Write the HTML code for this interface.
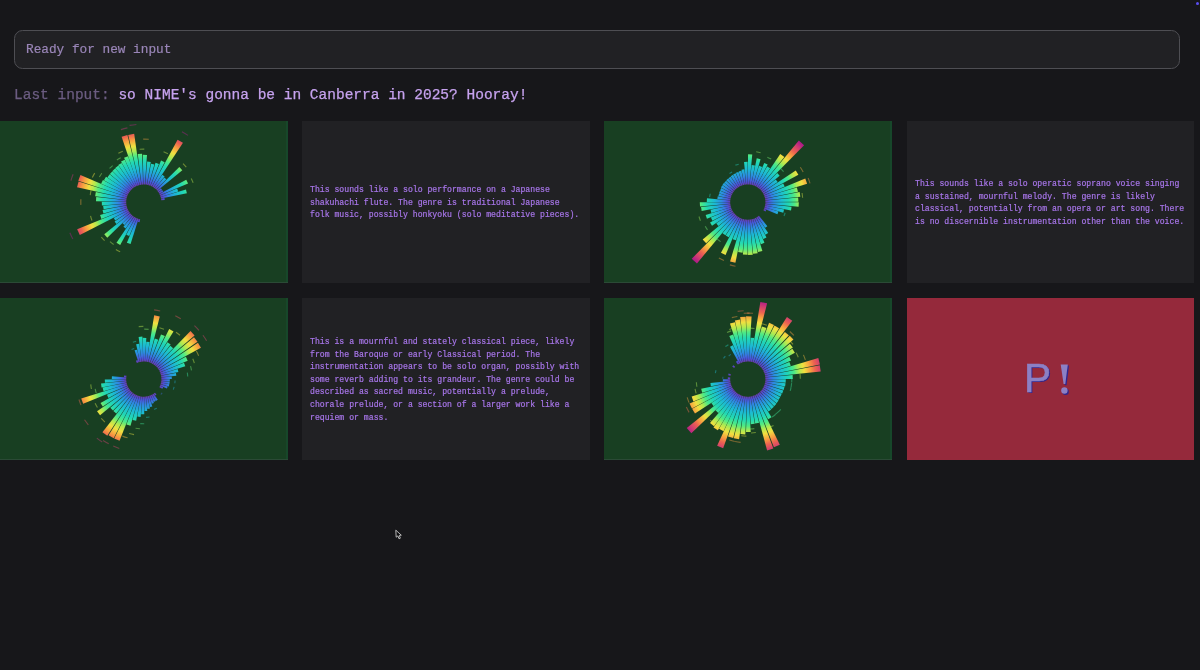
<!DOCTYPE html>
<html><head><meta charset="utf-8"><style>
*{margin:0;padding:0;box-sizing:border-box}
html,body{width:1200px;height:670px;overflow:hidden;background:#17171a}
body{position:relative;font-family:"Liberation Mono",monospace}
.ph,.last,.txt,.pb{will-change:transform}
.inp{position:absolute;left:14px;top:30px;width:1165.5px;height:38.5px;border:1.5px solid #4e4e53;border-radius:8.5px;background:#212124}
.ph{position:absolute;left:26px;top:41px;font-size:12.75px;line-height:18px;color:#9a86b8;white-space:pre;-webkit-text-stroke:0.2px #9a86b8}
.last{position:absolute;left:14px;top:86px;font-size:14.5px;line-height:18px;white-space:pre;color:#c6a2ee;-webkit-text-stroke:0.25px #c6a2ee}
.last span{color:#6c5d82;-webkit-text-stroke:0.25px #6c5d82}
.p{position:absolute;overflow:hidden}
.g{background:#183f22;box-shadow:inset 0 -1px 0 #2b4a36,inset -2px 0 0 #17472a}
.t{background:#212124}
.r{background:#95293b}
.txt{position:absolute;left:7.8px;right:0;font-size:8.17px;line-height:12.6px;color:#a876ea;white-space:pre;-webkit-text-stroke:0.2px #a876ea}
.pb{position:absolute;font-family:"Liberation Sans",sans-serif;font-size:40.5px;line-height:48px;color:#8c80c4;text-shadow:1.2px 1.2px 0 #2e2690;white-space:pre;-webkit-text-stroke:0.6px #8c80c4}
.pb b{font-weight:bold;display:inline-block;transform:scaleX(1.15)}
.cur{position:absolute;left:0;top:0}
.dot{position:absolute;left:1195.8px;top:2px;width:3.2px;height:3.2px;border-radius:50%;background:#5a4ef0}
</style></head>
<body>
<div class="dot"></div>
<svg class="cur" width="1200" height="670" style="position:absolute;left:0;top:0"><path d="M395.8 530.2 L396.2 537.2 L397.9 535.9 L399 538.8 L400.3 538.2 L399.3 535.4 L401.3 535.2 Z" fill="#0e0e10" stroke="#c8c8c8" stroke-width="0.9" stroke-linejoin="round"/></svg>
<div class="inp"></div>
<div class="ph">Ready for new input</div>
<div class="last"><span>Last input:</span> so NIME's gonna be in Canberra in 2025? Hooray!</div>
<div class="p g" style="left:0px;top:120.6px;width:287.6px;height:162.2px"><svg width="287.6" height="162.2" style="position:absolute;left:0;top:0"><defs><radialGradient id="g00" gradientUnits="userSpaceOnUse" cx="0" cy="0" r="90.0"><stop offset="0.0000" stop-color="#6a3cb0"/><stop offset="0.1956" stop-color="#6a3cb0"/><stop offset="0.2278" stop-color="#4c50d8"/><stop offset="0.2889" stop-color="#2e88e2"/><stop offset="0.3667" stop-color="#1cb8d4"/><stop offset="0.4556" stop-color="#22d8b4"/><stop offset="0.5222" stop-color="#50ea84"/><stop offset="0.5778" stop-color="#b0ea50"/><stop offset="0.6333" stop-color="#f0e040"/><stop offset="0.7000" stop-color="#f8a040"/><stop offset="0.7556" stop-color="#ec6450"/><stop offset="0.8222" stop-color="#d03c70"/><stop offset="0.8778" stop-color="#b01c88"/><stop offset="0.9444" stop-color="#981090"/><stop offset="1.0000" stop-color="#901090"/></radialGradient></defs><g transform="translate(143.80,81.10)" fill="url(#g00)"><path d="M-3.62 17.22 L-4.22 20.06 L-5.97 19.61 L-5.13 16.84Z"/><path d="M-5.30 16.78 L-13.25 41.96 L-16.90 40.63 L-6.76 16.25Z"/><path d="M-6.92 16.18 L-14.56 34.02 L-17.50 32.60 L-8.32 15.51Z"/><path d="M-8.48 15.42 L-23.61 42.94 L-27.31 40.68 L-9.81 14.61Z"/><path d="M-9.96 14.51 L-18.10 26.39 L-20.36 24.69 L-11.20 13.58Z"/><path d="M-11.34 13.46 L-19.32 22.95 L-21.27 21.15 L-12.48 12.41Z"/><path d="M-12.60 12.28 L-36.53 35.59 L-39.52 32.23 L-13.64 11.12Z"/><path d="M-13.75 10.98 L-27.35 21.84 L-29.17 19.34 L-14.67 9.73Z"/><path d="M-14.77 9.58 L-28.52 18.50 L-30.05 15.91 L-15.55 8.24Z"/><path d="M-15.64 8.07 L-63.98 33.02 L-66.65 27.24 L-16.29 6.66Z"/><path d="M-16.36 6.48 L-42.40 16.79 L-43.71 12.99 L-16.87 5.01Z"/><path d="M-16.92 4.83 L-40.39 11.52 L-41.25 7.91 L-17.28 3.32Z"/><path d="M-17.32 3.13 L-40.15 7.25 L-40.63 3.68 L-17.53 1.59Z"/><path d="M-17.54 1.40 L-41.87 3.34 L-42.00 -0.37 L-17.60 -0.16Z"/><path d="M-17.60 -0.35 L-47.79 -0.94 L-47.52 -5.16 L-17.50 -1.90Z"/><path d="M-17.48 -2.09 L-48.65 -5.81 L-47.95 -10.09 L-17.22 -3.62Z"/><path d="M-17.18 -3.81 L-66.78 -14.80 L-65.21 -20.64 L-16.78 -5.31Z"/><path d="M-16.74 -5.45 L-65.52 -21.33 L-63.38 -27.03 L-16.19 -6.90Z"/><path d="M-16.15 -6.99 L-42.67 -18.47 L-40.88 -22.16 L-15.47 -8.39Z"/><path d="M-15.43 -8.47 L-39.88 -21.90 L-37.79 -25.33 L-14.62 -9.80Z"/><path d="M-14.57 -9.88 L-36.42 -24.69 L-34.10 -27.81 L-13.64 -11.12Z"/><path d="M-13.58 -11.20 L-33.95 -27.99 L-31.34 -30.88 L-12.54 -12.35Z"/><path d="M-12.47 -12.42 L-31.32 -31.19 L-28.44 -33.83 L-11.33 -13.47Z"/><path d="M-11.27 -13.52 L-28.49 -34.18 L-25.37 -36.56 L-10.03 -14.46Z"/><path d="M-9.98 -14.50 L-25.52 -37.06 L-22.15 -39.17 L-8.66 -15.32Z"/><path d="M-8.61 -15.35 L-22.75 -40.56 L-19.08 -42.41 L-7.22 -16.05Z"/><path d="M-7.17 -16.08 L-19.75 -44.30 L-15.76 -45.87 L-5.72 -16.64Z"/><path d="M-5.66 -16.66 L-22.19 -65.33 L-16.34 -67.04 L-4.17 -17.10Z"/><path d="M-3.98 -17.14 L-15.61 -67.21 L-9.62 -68.33 L-2.45 -17.43Z"/><path d="M-2.19 -17.46 L-6.03 -48.12 L-1.76 -48.47 L-0.64 -17.59Z"/><path d="M-0.37 -17.60 L-1.00 -47.29 L3.18 -47.19 L1.18 -17.56Z"/><path d="M1.45 -17.54 L3.36 -40.66 L6.94 -40.21 L2.99 -17.34Z"/><path d="M3.26 -17.30 L7.21 -38.33 L10.57 -37.54 L4.77 -16.94Z"/><path d="M5.03 -16.87 L11.71 -39.29 L15.13 -38.11 L6.49 -16.36Z"/><path d="M6.74 -16.26 L17.24 -41.57 L20.84 -39.88 L8.15 -15.60Z"/><path d="M8.37 -15.48 L33.78 -62.45 L39.16 -59.23 L9.71 -14.68Z"/><path d="M9.85 -14.59 L18.47 -27.35 L20.81 -25.61 L11.10 -13.66Z"/><path d="M11.23 -13.55 L20.42 -24.64 L22.52 -22.74 L12.38 -12.51Z"/><path d="M12.51 -12.38 L35.53 -35.18 L38.49 -31.91 L13.55 -11.23Z"/><path d="M13.66 -11.10 L17.07 -13.87 L18.23 -12.31 L14.59 -9.85Z"/><path d="M14.68 -9.71 L18.35 -12.13 L19.35 -10.47 L15.48 -8.37Z"/><path d="M15.56 -8.22 L42.44 -22.42 L44.26 -18.59 L16.23 -6.81Z"/><path d="M16.29 -6.66 L33.33 -13.61 L34.40 -10.62 L16.82 -5.19Z"/><path d="M16.87 -5.03 L42.17 -12.57 L43.11 -8.80 L17.24 -3.52Z"/><path d="M17.28 -3.35 L20.62 -4.00 L20.89 -2.16 L17.51 -1.81Z"/><path d="M-22.89 -72.47 A76 76 0 0 1 -16.41 -74.21" fill="none" stroke="url(#g00)" stroke-width="1.1" opacity="0.45"/><path d="M-14.26 -76.69 A78 78 0 0 1 -7.43 -77.64" fill="none" stroke="url(#g00)" stroke-width="1.1" opacity="0.45"/><path d="M38.13 -70.33 A80 80 0 0 1 44.19 -66.69" fill="none" stroke="url(#g00)" stroke-width="1.1" opacity="0.45"/><path d="M-0.58 -63.00 A63 63 0 0 1 4.98 -62.80" fill="none" stroke="url(#g00)" stroke-width="1.1" opacity="0.45"/><path d="M-25.42 -48.77 A55 55 0 0 1 -21.02 -50.82" fill="none" stroke="url(#g00)" stroke-width="1.1" opacity="0.45"/><path d="M-4.19 -52.83 A53 53 0 0 1 0.49 -53.00" fill="none" stroke="url(#g00)" stroke-width="1.1" opacity="0.45"/><path d="M19.76 -50.25 A54 54 0 0 1 24.12 -48.31" fill="none" stroke="url(#g00)" stroke-width="1.1" opacity="0.45"/><path d="M39.21 -38.57 A55 55 0 0 1 42.46 -34.96" fill="none" stroke="url(#g00)" stroke-width="1.1" opacity="0.45"/><path d="M47.42 -23.67 A53 53 0 0 1 49.32 -19.40" fill="none" stroke="url(#g00)" stroke-width="1.1" opacity="0.45"/><path d="M-26.89 -42.15 A50 50 0 0 1 -23.06 -44.36" fill="none" stroke="url(#g00)" stroke-width="1.1" opacity="0.45"/><path d="M-34.25 -33.62 A48 48 0 0 1 -31.15 -36.52" fill="none" stroke="url(#g00)" stroke-width="1.1" opacity="0.45"/><path d="M-44.40 -25.09 A51 51 0 0 1 -42.01 -28.91" fill="none" stroke="url(#g00)" stroke-width="1.1" opacity="0.45"/><path d="M-51.46 -24.51 A57 57 0 0 1 -49.10 -28.96" fill="none" stroke="url(#g00)" stroke-width="1.1" opacity="0.45"/><path d="M-72.88 -21.55 A76 76 0 0 1 -70.70 -27.89" fill="none" stroke="url(#g00)" stroke-width="1.1" opacity="0.45"/><path d="M-62.94 2.78 A63 63 0 0 1 -62.94 -2.78" fill="none" stroke="url(#g00)" stroke-width="1.1" opacity="0.45"/><path d="M-53.54 -7.02 A54 54 0 0 1 -52.71 -11.72" fill="none" stroke="url(#g00)" stroke-width="1.1" opacity="0.45"/><path d="M-51.84 18.39 A55 55 0 0 1 -53.26 13.74" fill="none" stroke="url(#g00)" stroke-width="1.1" opacity="0.45"/><path d="M-70.94 36.98 A80 80 0 0 1 -73.93 30.57" fill="none" stroke="url(#g00)" stroke-width="1.1" opacity="0.45"/><path d="M-39.21 38.57 A55 55 0 0 1 -42.46 34.96" fill="none" stroke="url(#g00)" stroke-width="1.1" opacity="0.45"/><path d="M-30.17 42.35 A52 52 0 0 1 -33.79 39.52" fill="none" stroke="url(#g00)" stroke-width="1.1" opacity="0.45"/><path d="M-23.65 49.66 A55 55 0 0 1 -27.94 47.37" fill="none" stroke="url(#g00)" stroke-width="1.1" opacity="0.45"/></g></svg></div>
<div class="p t" style="left:302px;top:120.6px;width:287.6px;height:162.2px"><div class="txt" style="top:63px">This sounds like a solo performance on a Japanese
shakuhachi flute. The genre is traditional Japanese
folk music, possibly honkyoku (solo meditative pieces).</div></div>
<div class="p g" style="left:604px;top:120.6px;width:287.6px;height:162.2px"><svg width="287.6" height="162.2" style="position:absolute;left:0;top:0"><defs><radialGradient id="g20" gradientUnits="userSpaceOnUse" cx="0" cy="0" r="90.0"><stop offset="0.0000" stop-color="#6a3cb0"/><stop offset="0.1956" stop-color="#6a3cb0"/><stop offset="0.2278" stop-color="#4c50d8"/><stop offset="0.2889" stop-color="#2e88e2"/><stop offset="0.3667" stop-color="#1cb8d4"/><stop offset="0.4556" stop-color="#22d8b4"/><stop offset="0.5222" stop-color="#50ea84"/><stop offset="0.5778" stop-color="#b0ea50"/><stop offset="0.6333" stop-color="#f0e040"/><stop offset="0.7000" stop-color="#f8a040"/><stop offset="0.7556" stop-color="#ec6450"/><stop offset="0.8222" stop-color="#d03c70"/><stop offset="0.8778" stop-color="#b01c88"/><stop offset="0.9444" stop-color="#981090"/><stop offset="1.0000" stop-color="#901090"/></radialGradient></defs><g transform="translate(143.80,81.10)" fill="url(#g20)"><path d="M17.60 0.09 L51.00 0.25 L50.78 4.75 L17.52 1.64Z"/><path d="M17.51 1.81 L43.77 4.53 L43.20 8.37 L17.28 3.35Z"/><path d="M17.24 3.52 L36.25 7.40 L35.46 10.57 L16.87 5.03Z"/><path d="M16.82 5.19 L30.58 9.44 L29.62 12.10 L16.29 6.66Z"/><path d="M16.23 6.81 L18.44 7.74 L17.68 9.34 L15.56 8.22Z"/><path d="M11.10 13.66 L19.55 24.06 L17.35 25.69 L9.85 14.59Z"/><path d="M9.71 14.68 L20.40 30.86 L17.60 32.55 L8.37 15.48Z"/><path d="M8.22 15.56 L18.68 35.37 L15.49 36.88 L6.81 16.23Z"/><path d="M6.66 16.29 L16.64 40.73 L12.98 42.04 L5.19 16.82Z"/><path d="M5.03 16.87 L14.56 48.88 L10.20 49.97 L3.52 17.24Z"/><path d="M3.35 17.28 L9.89 51.05 L5.35 51.72 L1.81 17.51Z"/><path d="M1.64 17.52 L4.94 52.77 L0.26 53.00 L0.09 17.60Z"/><path d="M-0.09 17.60 L-0.26 52.70 L-4.91 52.47 L-1.64 17.52Z"/><path d="M-1.81 17.51 L-5.23 50.53 L-9.67 49.87 L-3.35 17.28Z"/><path d="M-3.52 17.24 L-12.39 60.75 L-17.71 59.42 L-5.03 16.87Z"/><path d="M-5.19 16.82 L-11.80 38.22 L-15.13 37.03 L-6.66 16.29Z"/><path d="M-6.81 16.23 L-22.23 52.92 L-26.81 50.75 L-8.22 15.56Z"/><path d="M-8.37 15.48 L-19.03 35.18 L-22.06 33.37 L-9.71 14.68Z"/><path d="M-9.85 14.59 L-22.39 33.15 L-25.22 31.04 L-11.10 13.66Z"/><path d="M-11.23 13.55 L-50.86 61.36 L-56.08 56.63 L-12.38 12.51Z"/><path d="M-12.51 12.38 L-41.64 41.23 L-45.12 37.40 L-13.55 11.23Z"/><path d="M-13.66 11.10 L-29.49 23.96 L-31.49 21.27 L-14.59 9.85Z"/><path d="M-14.68 9.71 L-35.79 23.66 L-37.73 20.41 L-15.48 8.37Z"/><path d="M-15.56 8.22 L-35.37 18.68 L-36.88 15.49 L-16.23 6.81Z"/><path d="M-16.29 6.66 L-40.83 16.68 L-42.14 13.01 L-16.82 5.19Z"/><path d="M-16.87 5.03 L-36.42 10.85 L-37.23 7.60 L-17.24 3.52Z"/><path d="M-17.28 3.35 L-46.14 8.94 L-46.75 4.84 L-17.51 1.81Z"/><path d="M-17.52 1.64 L-47.79 4.47 L-48.00 0.24 L-17.60 0.09Z"/><path d="M-17.60 -0.09 L-41.00 -0.20 L-40.82 -3.82 L-17.52 -1.64Z"/><path d="M-17.51 -1.81 L-30.44 -3.15 L-30.04 -5.82 L-17.28 -3.35Z"/><path d="M-17.24 -3.52 L-29.39 -6.00 L-28.75 -8.57 L-16.87 -5.03Z"/><path d="M-16.82 -5.19 L-28.67 -8.85 L-27.77 -11.34 L-16.29 -6.66Z"/><path d="M-16.23 -6.81 L-27.66 -11.62 L-26.53 -14.01 L-15.56 -8.22Z"/><path d="M-15.48 -8.37 L-26.83 -14.51 L-25.44 -16.82 L-14.68 -9.71Z"/><path d="M-14.59 -9.85 L-25.36 -17.13 L-23.75 -19.30 L-13.66 -11.10Z"/><path d="M-13.55 -11.23 L-23.48 -19.46 L-21.67 -21.46 L-12.51 -12.38Z"/><path d="M-12.38 -12.51 L-21.53 -21.74 L-19.53 -23.56 L-11.23 -13.55Z"/><path d="M-11.10 -13.66 L-19.36 -23.83 L-17.18 -25.44 L-9.85 -14.59Z"/><path d="M-9.71 -14.68 L-17.10 -25.86 L-14.75 -27.27 L-8.37 -15.48Z"/><path d="M-8.22 -15.56 L-14.62 -27.68 L-12.12 -28.86 L-6.81 -16.23Z"/><path d="M-6.66 -16.29 L-11.95 -29.25 L-9.32 -30.19 L-5.19 -16.82Z"/><path d="M-5.03 -16.87 L-9.14 -30.67 L-6.40 -31.35 L-3.52 -17.24Z"/><path d="M-3.35 -17.28 L-6.28 -32.40 L-3.40 -32.82 L-1.81 -17.51Z"/><path d="M-1.64 -17.52 L-3.75 -40.12 L-0.20 -40.30 L-0.09 -17.60Z"/><path d="M0.09 -17.60 L0.24 -47.90 L4.46 -47.69 L1.64 -17.52Z"/><path d="M1.81 -17.51 L3.85 -37.20 L7.12 -36.72 L3.35 -17.28Z"/><path d="M3.52 -17.24 L8.94 -43.80 L12.77 -42.84 L5.03 -16.87Z"/><path d="M5.19 -16.82 L11.21 -36.31 L14.37 -35.18 L6.66 -16.29Z"/><path d="M6.81 -16.23 L16.46 -39.18 L19.85 -37.58 L8.22 -15.56Z"/><path d="M8.37 -15.48 L19.27 -35.62 L22.34 -33.78 L9.71 -14.68Z"/><path d="M9.85 -14.59 L32.46 -48.07 L36.57 -45.01 L11.10 -13.66Z"/><path d="M11.23 -13.55 L51.05 -61.59 L56.29 -56.85 L12.38 -12.51Z"/><path d="M12.51 -12.38 L29.42 -29.13 L31.87 -26.42 L13.55 -11.23Z"/><path d="M13.66 -11.10 L27.94 -22.70 L29.83 -20.15 L14.59 -9.85Z"/><path d="M14.68 -9.71 L47.97 -31.71 L50.58 -27.35 L15.48 -8.37Z"/><path d="M15.56 -8.22 L35.37 -18.68 L36.88 -15.49 L16.23 -6.81Z"/><path d="M16.29 -6.66 L57.49 -23.48 L59.34 -18.32 L16.82 -5.19Z"/><path d="M16.87 -5.03 L49.07 -14.62 L50.17 -10.24 L17.24 -3.52Z"/><path d="M17.28 -3.35 L51.84 -10.05 L52.52 -5.43 L17.51 -1.81Z"/><path d="M17.52 -1.64 L50.38 -4.71 L50.60 -0.25 L17.60 -0.09Z"/><path d="M8.39 -50.31 A51 51 0 0 1 12.80 -49.37" fill="none" stroke="url(#g20)" stroke-width="1.1" opacity="0.45"/><path d="M19.51 -44.95 A49 49 0 0 1 23.40 -43.05" fill="none" stroke="url(#g20)" stroke-width="1.1" opacity="0.45"/><path d="M32.92 -33.54 A47 47 0 0 1 35.76 -30.50" fill="none" stroke="url(#g20)" stroke-width="1.1" opacity="0.45"/><path d="M52.52 -34.80 A63 63 0 0 1 55.38 -30.03" fill="none" stroke="url(#g20)" stroke-width="1.1" opacity="0.45"/><path d="M60.34 -24.17 A65 65 0 0 1 62.24 -18.75" fill="none" stroke="url(#g20)" stroke-width="1.1" opacity="0.45"/><path d="M54.24 -9.11 A55 55 0 0 1 54.83 -4.29" fill="none" stroke="url(#g20)" stroke-width="1.1" opacity="0.45"/><path d="M17.89 34.32 A38.7 38.7 0 0 1 14.79 35.76" fill="none" stroke="url(#g20)" stroke-width="1.1" opacity="0.45"/><path d="M37.30 10.67 A38.8 38.8 0 0 1 36.22 13.92" fill="none" stroke="url(#g20)" stroke-width="1.1" opacity="0.45"/><path d="M-23.87 58.30 A63 63 0 0 1 -28.93 55.97" fill="none" stroke="url(#g20)" stroke-width="1.1" opacity="0.45"/><path d="M-12.31 64.13 A65.3 65.3 0 0 1 -17.92 62.79" fill="none" stroke="url(#g20)" stroke-width="1.1" opacity="0.45"/><path d="M-47.35 18.68 A50.9 50.9 0 0 1 -48.81 14.43" fill="none" stroke="url(#g20)" stroke-width="1.1" opacity="0.45"/><path d="M-40.28 27.72 A48.9 48.9 0 0 1 -42.57 24.06" fill="none" stroke="url(#g20)" stroke-width="1.1" opacity="0.45"/><path d="M-27.17 39.57 A48 48 0 0 1 -30.55 37.02" fill="none" stroke="url(#g20)" stroke-width="1.1" opacity="0.45"/><path d="M-12.40 -36.98 A39 39 0 0 1 -9.08 -37.93" fill="none" stroke="url(#g20)" stroke-width="1.1" opacity="0.45"/><path d="M-18.28 -28.67 A34 34 0 0 1 -15.68 -30.17" fill="none" stroke="url(#g20)" stroke-width="1.1" opacity="0.45"/><path d="M-38.17 -5.00 A38.5 38.5 0 0 1 -37.58 -8.35" fill="none" stroke="url(#g20)" stroke-width="1.1" opacity="0.45"/></g></svg></div>
<div class="p t" style="left:906.8px;top:120.6px;width:287.6px;height:162.2px"><div class="txt" style="top:57px">This sounds like a solo operatic soprano voice singing
a sustained, mournful melody. The genre is likely
classical, potentially from an opera or art song. There
is no discernible instrumentation other than the voice.</div></div>
<div class="p g" style="left:0px;top:297.6px;width:287.6px;height:162.2px"><svg width="287.6" height="162.2" style="position:absolute;left:0;top:0"><defs><radialGradient id="g01" gradientUnits="userSpaceOnUse" cx="0" cy="0" r="90.0"><stop offset="0.0000" stop-color="#6a3cb0"/><stop offset="0.1956" stop-color="#6a3cb0"/><stop offset="0.2278" stop-color="#4c50d8"/><stop offset="0.2889" stop-color="#2e88e2"/><stop offset="0.3667" stop-color="#1cb8d4"/><stop offset="0.4556" stop-color="#22d8b4"/><stop offset="0.5222" stop-color="#50ea84"/><stop offset="0.5778" stop-color="#b0ea50"/><stop offset="0.6333" stop-color="#f0e040"/><stop offset="0.7000" stop-color="#f8a040"/><stop offset="0.7556" stop-color="#ec6450"/><stop offset="0.8222" stop-color="#d03c70"/><stop offset="0.8778" stop-color="#b01c88"/><stop offset="0.9444" stop-color="#981090"/><stop offset="1.0000" stop-color="#901090"/></radialGradient></defs><g transform="translate(143.80,81.10)" fill="url(#g01)"><path d="M17.60 0.08 L26.00 0.12 L25.89 2.41 L17.52 1.63Z"/><path d="M17.51 1.79 L25.87 2.64 L25.53 4.92 L17.28 3.33Z"/><path d="M17.25 3.48 L25.49 5.15 L24.93 7.37 L16.88 4.99Z"/><path d="M16.83 5.14 L23.91 7.31 L23.17 9.39 L16.31 6.61Z"/><path d="M16.25 6.76 L19.39 8.06 L18.60 9.74 L15.59 8.16Z"/><path d="M11.20 13.57 L12.73 15.42 L11.32 16.49 L9.96 14.51Z"/><path d="M9.83 14.60 L13.97 20.74 L12.08 21.89 L8.51 15.41Z"/><path d="M8.37 15.48 L11.90 21.99 L9.91 22.95 L6.98 16.16Z"/><path d="M6.84 16.22 L10.11 23.96 L7.95 24.75 L5.38 16.76Z"/><path d="M5.24 16.80 L8.52 27.30 L6.08 27.95 L3.74 17.20Z"/><path d="M3.60 17.23 L6.13 29.37 L3.52 29.79 L2.06 17.48Z"/><path d="M1.92 17.50 L3.48 31.81 L0.66 31.99 L0.37 17.60Z"/><path d="M0.22 17.60 L0.44 35.20 L-2.67 35.10 L-1.34 17.55Z"/><path d="M-1.48 17.54 L-3.20 37.87 L-6.53 37.44 L-3.02 17.34Z"/><path d="M-3.17 17.31 L-7.63 41.71 L-11.28 40.87 L-4.68 16.97Z"/><path d="M-4.82 16.93 L-13.30 46.64 L-17.36 45.29 L-6.30 16.43Z"/><path d="M-6.44 16.38 L-24.25 61.71 L-29.60 59.33 L-7.86 15.75Z"/><path d="M-8.00 15.68 L-30.14 59.05 L-35.23 56.16 L-9.35 14.91Z"/><path d="M-9.55 14.78 L-36.52 56.53 L-41.36 53.09 L-10.82 13.88Z"/><path d="M-11.00 13.74 L-27.50 34.35 L-30.42 31.79 L-12.17 12.71Z"/><path d="M-12.34 12.55 L-30.84 31.38 L-33.49 28.54 L-13.40 11.41Z"/><path d="M-13.55 11.24 L-43.72 36.26 L-46.75 32.26 L-14.49 10.00Z"/><path d="M-14.62 9.80 L-41.03 27.52 L-43.29 23.79 L-15.42 8.48Z"/><path d="M-15.54 8.27 L-35.31 18.80 L-36.83 15.61 L-16.20 6.87Z"/><path d="M-16.29 6.66 L-60.63 24.77 L-62.58 19.32 L-16.82 5.19Z"/><path d="M-16.86 5.05 L-40.24 12.04 L-41.14 8.44 L-17.24 3.54Z"/><path d="M-17.27 3.39 L-42.20 8.28 L-42.76 4.52 L-17.50 1.85Z"/><path d="M-17.52 1.70 L-38.82 3.76 L-39.00 0.32 L-17.60 0.15Z"/><path d="M-17.60 -0.01 L-32.00 -0.02 L-31.87 -2.84 L-17.53 -1.56Z"/><path d="M-17.52 -1.71 L-19.90 -1.95 L-19.66 -3.70 L-17.30 -3.25Z"/><path d="M-6.94 -16.17 L-7.89 -18.38 L-6.24 -19.00 L-5.49 -16.72Z"/><path d="M-5.39 -16.76 L-9.24 -28.75 L-6.67 -29.45 L-3.89 -17.17Z"/><path d="M-3.78 -17.19 L-7.65 -34.77 L-4.55 -35.31 L-2.25 -17.46Z"/><path d="M-2.15 -17.47 L-5.18 -42.18 L-1.44 -42.48 L-0.60 -17.59Z"/><path d="M-0.49 -17.59 L-1.15 -41.28 L2.50 -41.22 L1.07 -17.57Z"/><path d="M1.17 -17.56 L2.50 -37.42 L5.79 -37.05 L2.72 -17.39Z"/><path d="M2.82 -17.37 L10.38 -63.86 L15.98 -62.70 L4.35 -17.05Z"/><path d="M4.60 -16.99 L10.97 -40.54 L14.50 -39.42 L6.08 -16.52Z"/><path d="M6.32 -16.43 L17.20 -44.70 L21.08 -43.01 L7.75 -15.80Z"/><path d="M7.97 -15.69 L25.41 -50.02 L29.72 -47.58 L9.32 -14.93Z"/><path d="M9.51 -14.81 L23.66 -36.86 L26.82 -34.63 L10.78 -13.91Z"/><path d="M10.95 -13.78 L26.50 -33.36 L29.34 -30.89 L12.12 -12.76Z"/><path d="M12.28 -12.61 L46.73 -48.01 L50.79 -43.70 L13.34 -11.48Z"/><path d="M13.51 -11.28 L50.20 -41.92 L53.70 -37.33 L14.45 -10.05Z"/><path d="M14.61 -9.81 L54.14 -36.33 L57.13 -31.41 L15.42 -8.48Z"/><path d="M15.56 -8.23 L42.08 -22.25 L43.88 -18.45 L16.22 -6.82Z"/><path d="M16.29 -6.66 L40.18 -16.41 L41.47 -12.80 L16.82 -5.19Z"/><path d="M16.87 -5.03 L33.83 -10.08 L34.59 -7.06 L17.24 -3.52Z"/><path d="M17.28 -3.35 L32.10 -6.22 L32.53 -3.36 L17.51 -1.81Z"/><path d="M17.52 -1.64 L27.88 -2.61 L28.00 -0.14 L17.60 -0.09Z"/><path d="M10.31 -69.24 A70 70 0 0 1 16.38 -68.06" fill="none" stroke="url(#g01)" stroke-width="1.1" opacity="0.45"/><path d="M31.51 -63.29 A70.7 70.7 0 0 1 36.97 -60.26" fill="none" stroke="url(#g01)" stroke-width="1.1" opacity="0.45"/><path d="M50.63 -53.42 A73.6 73.6 0 0 1 55.15 -48.74" fill="none" stroke="url(#g01)" stroke-width="1.1" opacity="0.45"/><path d="M59.14 -43.81 A73.6 73.6 0 0 1 62.78 -38.42" fill="none" stroke="url(#g01)" stroke-width="1.1" opacity="0.45"/><path d="M15.67 -51.36 A53.7 53.7 0 0 1 20.14 -49.78" fill="none" stroke="url(#g01)" stroke-width="1.1" opacity="0.45"/><path d="M32.20 -46.91 A56.9 56.9 0 0 1 36.22 -43.89" fill="none" stroke="url(#g01)" stroke-width="1.1" opacity="0.45"/><path d="M52.56 -28.10 A59.6 59.6 0 0 1 54.83 -23.35" fill="none" stroke="url(#g01)" stroke-width="1.1" opacity="0.45"/><path d="M48.95 -20.31 A53 53 0 0 1 50.56 -15.91" fill="none" stroke="url(#g01)" stroke-width="1.1" opacity="0.45"/><path d="M46.73 -12.99 A48.5 48.5 0 0 1 47.69 -8.81" fill="none" stroke="url(#g01)" stroke-width="1.1" opacity="0.45"/><path d="M43.51 -6.53 A44 44 0 0 1 43.92 -2.66" fill="none" stroke="url(#g01)" stroke-width="1.1" opacity="0.45"/><path d="M0.41 -50.00 A50 50 0 0 1 4.82 -49.77" fill="none" stroke="url(#g01)" stroke-width="1.1" opacity="0.45"/><path d="M31.27 1.35 A31.3 31.3 0 0 1 31.03 4.10" fill="none" stroke="url(#g01)" stroke-width="1.1" opacity="0.45"/><path d="M30.31 7.82 A31.3 31.3 0 0 1 29.50 10.46" fill="none" stroke="url(#g01)" stroke-width="1.1" opacity="0.45"/><path d="M18.38 13.83 A23 23 0 0 1 17.08 15.40" fill="none" stroke="url(#g01)" stroke-width="1.1" opacity="0.45"/><path d="M13.03 29.23 A32 32 0 0 1 10.40 30.26" fill="none" stroke="url(#g01)" stroke-width="1.1" opacity="0.45"/><path d="M5.68 37.88 A38.3 38.3 0 0 1 2.32 38.23" fill="none" stroke="url(#g01)" stroke-width="1.1" opacity="0.45"/><path d="M-62.81 26.06 A68 68 0 0 1 -64.86 20.41" fill="none" stroke="url(#g01)" stroke-width="1.1" opacity="0.45"/><path d="M-55.45 45.76 A71.9 71.9 0 0 1 -59.28 40.69" fill="none" stroke="url(#g01)" stroke-width="1.1" opacity="0.45"/><path d="M-41.58 62.90 A75.4 75.4 0 0 1 -46.97 58.98" fill="none" stroke="url(#g01)" stroke-width="1.1" opacity="0.45"/><path d="M-24.53 69.39 A73.6 73.6 0 0 1 -30.56 66.96" fill="none" stroke="url(#g01)" stroke-width="1.1" opacity="0.45"/><path d="M-35.08 64.70 A73.6 73.6 0 0 1 -40.66 61.35" fill="none" stroke="url(#g01)" stroke-width="1.1" opacity="0.45"/><path d="M-46.37 28.45 A54.4 54.4 0 0 1 -48.70 24.25" fill="none" stroke="url(#g01)" stroke-width="1.1" opacity="0.45"/><path d="M-38.94 42.99 A58 58 0 0 1 -42.58 39.38" fill="none" stroke="url(#g01)" stroke-width="1.1" opacity="0.45"/><path d="M-16.24 58.69 A60.9 60.9 0 0 1 -21.36 57.03" fill="none" stroke="url(#g01)" stroke-width="1.1" opacity="0.45"/><path d="M-9.76 55.55 A56.4 56.4 0 0 1 -14.63 54.47" fill="none" stroke="url(#g01)" stroke-width="1.1" opacity="0.45"/><path d="M-3.88 49.65 A49.8 49.8 0 0 1 -8.25 49.11" fill="none" stroke="url(#g01)" stroke-width="1.1" opacity="0.45"/><path d="M0.41 44.70 A44.7 44.7 0 0 1 -3.53 44.56" fill="none" stroke="url(#g01)" stroke-width="1.1" opacity="0.45"/><path d="M-52.37 9.92 A53.3 53.3 0 0 1 -53.04 5.26" fill="none" stroke="url(#g01)" stroke-width="1.1" opacity="0.45"/><path d="M-47.55 14.11 A49.6 49.6 0 0 1 -48.61 9.86" fill="none" stroke="url(#g01)" stroke-width="1.1" opacity="0.45"/><path d="M-5.08 -52.45 A52.7 52.7 0 0 1 -0.43 -52.70" fill="none" stroke="url(#g01)" stroke-width="1.1" opacity="0.45"/><path d="M-10.95 -36.91 A38.5 38.5 0 0 1 -7.66 -37.73" fill="none" stroke="url(#g01)" stroke-width="1.1" opacity="0.45"/><path d="M-12.26 -29.56 A32 32 0 0 1 -9.61 -30.52" fill="none" stroke="url(#g01)" stroke-width="1.1" opacity="0.45"/></g></svg></div>
<div class="p t" style="left:302px;top:297.6px;width:287.6px;height:162.2px"><div class="txt" style="top:38px">This is a mournful and stately classical piece, likely
from the Baroque or early Classical period. The
instrumentation appears to be solo organ, possibly with
some reverb adding to its grandeur. The genre could be
described as sacred music, potentially a prelude,
chorale prelude, or a section of a larger work like a
requiem or mass.</div></div>
<div class="p g" style="left:604px;top:297.6px;width:287.6px;height:162.2px"><svg width="287.6" height="162.2" style="position:absolute;left:0;top:0"><defs><radialGradient id="g21" gradientUnits="userSpaceOnUse" cx="0" cy="0" r="90.0"><stop offset="0.0000" stop-color="#6a3cb0"/><stop offset="0.1956" stop-color="#6a3cb0"/><stop offset="0.2278" stop-color="#4c50d8"/><stop offset="0.2889" stop-color="#2e88e2"/><stop offset="0.3667" stop-color="#1cb8d4"/><stop offset="0.4556" stop-color="#22d8b4"/><stop offset="0.5222" stop-color="#50ea84"/><stop offset="0.5778" stop-color="#b0ea50"/><stop offset="0.6333" stop-color="#f0e040"/><stop offset="0.7000" stop-color="#f8a040"/><stop offset="0.7556" stop-color="#ec6450"/><stop offset="0.8222" stop-color="#d03c70"/><stop offset="0.8778" stop-color="#b01c88"/><stop offset="0.9444" stop-color="#981090"/><stop offset="1.0000" stop-color="#901090"/></radialGradient></defs><g transform="translate(143.80,81.10)" fill="url(#g21)"><path d="M17.60 0.11 L38.00 0.23 L37.83 3.59 L17.52 1.66Z"/><path d="M17.50 1.88 L37.78 4.05 L37.28 7.37 L17.27 3.41Z"/><path d="M17.22 3.62 L36.70 7.72 L35.87 10.93 L16.84 5.13Z"/><path d="M16.77 5.34 L35.54 11.31 L34.41 14.40 L16.24 6.80Z"/><path d="M16.15 6.99 L33.95 14.70 L32.52 17.64 L15.47 8.39Z"/><path d="M15.37 8.58 L32.30 18.04 L30.59 20.82 L14.55 9.90Z"/><path d="M14.43 10.08 L30.74 21.48 L28.72 24.11 L13.48 11.31Z"/><path d="M13.34 11.48 L28.64 24.66 L26.36 27.10 L12.27 12.62Z"/><path d="M12.11 12.78 L26.14 27.58 L23.60 29.78 L10.93 13.79Z"/><path d="M10.75 13.94 L23.45 30.41 L20.68 32.36 L9.48 14.83Z"/><path d="M9.28 14.95 L23.74 38.23 L20.27 40.18 L7.93 15.71Z"/><path d="M7.72 15.82 L32.02 65.60 L26.11 68.17 L6.30 16.44Z"/><path d="M6.08 16.52 L25.54 69.35 L19.32 71.33 L4.60 16.99Z"/><path d="M4.41 17.04 L11.28 43.56 L7.39 44.39 L2.89 17.36Z"/><path d="M2.70 17.39 L6.93 44.66 L2.97 45.10 L1.15 17.56Z"/><path d="M0.96 17.57 L2.89 52.92 L-1.79 52.97 L-0.59 17.59Z"/><path d="M-0.79 17.58 L-2.49 55.44 L-7.37 55.01 L-2.34 17.44Z"/><path d="M-2.53 17.42 L-8.72 60.07 L-13.99 59.07 L-4.06 17.13Z"/><path d="M-4.25 17.08 L-14.62 58.81 L-19.75 57.29 L-5.74 16.64Z"/><path d="M-5.92 16.57 L-24.65 69.03 L-30.65 66.59 L-7.36 15.99Z"/><path d="M-7.43 15.95 L-24.25 52.03 L-28.74 49.69 L-8.81 15.23Z"/><path d="M-8.88 15.20 L-29.92 51.20 L-34.32 48.36 L-10.19 14.35Z"/><path d="M-10.25 14.31 L-33.77 47.15 L-37.80 43.99 L-11.47 13.35Z"/><path d="M-11.53 13.30 L-29.48 34.00 L-32.36 31.27 L-12.66 12.23Z"/><path d="M-12.71 12.17 L-56.48 54.09 L-61.03 48.90 L-13.74 11.00Z"/><path d="M-13.78 10.94 L-34.14 27.11 L-36.40 23.99 L-14.70 9.69Z"/><path d="M-14.74 9.62 L-52.84 34.49 L-55.67 29.70 L-15.53 8.28Z"/><path d="M-15.56 8.22 L-55.89 29.50 L-58.28 24.45 L-16.23 6.81Z"/><path d="M-16.29 6.67 L-54.41 22.29 L-56.17 17.40 L-16.81 5.21Z"/><path d="M-16.86 5.06 L-45.59 13.69 L-46.62 9.61 L-17.24 3.55Z"/><path d="M-17.27 3.40 L-36.89 7.27 L-37.39 3.98 L-17.50 1.86Z"/><path d="M-17.52 1.71 L-24.88 2.43 L-25.00 0.22 L-17.60 0.16Z"/><path d="M-17.60 0.00 L-20.00 0.00 L-19.92 -1.76 L-17.53 -1.55Z"/><path d="M-17.27 -3.39 L-19.62 -3.86 L-19.21 -5.57 L-16.90 -4.91Z"/><path d="M-13.69 -11.06 L-15.55 -12.57 L-14.38 -13.90 L-12.66 -12.23Z"/><path d="M-9.93 -14.53 L-11.85 -17.34 L-10.27 -18.32 L-8.61 -15.35Z"/><path d="M-8.48 -15.42 L-17.82 -32.43 L-14.89 -33.87 L-7.08 -16.11Z"/><path d="M-6.94 -16.17 L-18.50 -43.10 L-14.62 -44.56 L-5.49 -16.72Z"/><path d="M-5.39 -16.76 L-17.84 -55.50 L-12.87 -56.86 L-3.89 -17.17Z"/><path d="M-3.78 -17.19 L-12.90 -58.60 L-7.67 -59.51 L-2.25 -17.46Z"/><path d="M-2.15 -17.47 L-7.62 -62.03 L-2.11 -62.46 L-0.60 -17.59Z"/><path d="M-0.49 -17.59 L-1.74 -62.78 L3.80 -62.68 L1.07 -17.57Z"/><path d="M1.17 -17.56 L2.76 -41.41 L6.41 -41.00 L2.72 -17.39Z"/><path d="M2.82 -17.37 L12.55 -77.19 L19.31 -75.78 L4.35 -17.06Z"/><path d="M4.55 -17.00 L14.07 -52.55 L18.65 -51.10 L6.03 -16.53Z"/><path d="M6.23 -16.46 L21.32 -56.30 L26.20 -54.20 L7.66 -15.85Z"/><path d="M7.85 -15.75 L26.67 -53.52 L31.29 -50.96 L9.21 -15.00Z"/><path d="M9.39 -14.88 L39.12 -61.99 L44.44 -58.29 L10.67 -14.00Z"/><path d="M10.87 -13.84 L37.05 -47.19 L41.07 -43.74 L12.05 -12.83Z"/><path d="M12.23 -12.66 L41.97 -43.44 L45.64 -39.57 L13.30 -11.53Z"/><path d="M13.46 -11.34 L42.07 -35.43 L45.03 -31.58 L14.41 -10.11Z"/><path d="M14.55 -9.90 L44.56 -30.32 L47.06 -26.27 L15.37 -8.58Z"/><path d="M15.49 -8.36 L41.45 -22.37 L43.26 -18.62 L16.17 -6.96Z"/><path d="M16.26 -6.73 L41.58 -17.20 L42.94 -13.47 L16.79 -5.27Z"/><path d="M16.87 -5.03 L70.53 -21.02 L72.11 -14.72 L17.24 -3.52Z"/><path d="M17.28 -3.35 L71.96 -13.95 L72.91 -7.54 L17.51 -1.81Z"/><path d="M17.52 -1.64 L44.80 -4.19 L45.00 -0.22 L17.60 -0.09Z"/><path d="M14.29 -55.39 A57.2 57.2 0 0 1 19.12 -53.91" fill="none" stroke="url(#g21)" stroke-width="1.1" opacity="0.45"/><path d="M42.05 -47.58 A63.5 63.5 0 0 1 46.09 -43.69" fill="none" stroke="url(#g21)" stroke-width="1.1" opacity="0.45"/><path d="M42.00 -38.53 A57 57 0 0 1 45.24 -34.67" fill="none" stroke="url(#g21)" stroke-width="1.1" opacity="0.45"/><path d="M48.32 -26.27 A55 55 0 0 1 50.45 -21.90" fill="none" stroke="url(#g21)" stroke-width="1.1" opacity="0.45"/><path d="M55.65 -24.23 A60.7 60.7 0 0 1 57.57 -19.23" fill="none" stroke="url(#g21)" stroke-width="1.1" opacity="0.45"/><path d="M52.26 -5.06 A52.5 52.5 0 0 1 52.50 -0.43" fill="none" stroke="url(#g21)" stroke-width="1.1" opacity="0.45"/><path d="M-0.61 -66.00 A66 66 0 0 1 5.21 -65.79" fill="none" stroke="url(#g21)" stroke-width="1.1" opacity="0.45"/><path d="M2.20 -50.95 A51 51 0 0 1 6.68 -50.56" fill="none" stroke="url(#g21)" stroke-width="1.1" opacity="0.45"/><path d="M43.81 4.04 A44 44 0 0 1 43.29 7.89" fill="none" stroke="url(#g21)" stroke-width="1.1" opacity="0.45"/><path d="M44.00 -0.41 A44 44 0 0 1 43.86 3.48" fill="none" stroke="url(#g21)" stroke-width="1.1" opacity="0.45"/><path d="M43.27 7.99 A44 44 0 0 1 42.39 11.78" fill="none" stroke="url(#g21)" stroke-width="1.1" opacity="0.45"/><path d="M32.97 30.18 A44.7 44.7 0 0 1 30.18 32.97" fill="none" stroke="url(#g21)" stroke-width="1.1" opacity="0.45"/><path d="M30.22 32.94 A44.7 44.7 0 0 1 27.19 35.48" fill="none" stroke="url(#g21)" stroke-width="1.1" opacity="0.45"/><path d="M27.41 35.69 A45 45 0 0 1 24.16 37.97" fill="none" stroke="url(#g21)" stroke-width="1.1" opacity="0.45"/><path d="M25.72 46.34 A53 53 0 0 1 21.53 48.43" fill="none" stroke="url(#g21)" stroke-width="1.1" opacity="0.45"/><path d="M8.01 53.40 A54 54 0 0 1 3.27 53.90" fill="none" stroke="url(#g21)" stroke-width="1.1" opacity="0.45"/><path d="M6.55 49.57 A50 50 0 0 1 2.15 49.95" fill="none" stroke="url(#g21)" stroke-width="1.1" opacity="0.45"/><path d="M-58.73 33.27 A67.5 67.5 0 0 1 -61.44 27.96" fill="none" stroke="url(#g21)" stroke-width="1.1" opacity="0.45"/><path d="M-58.76 23.54 A63.3 63.3 0 0 1 -60.61 18.26" fill="none" stroke="url(#g21)" stroke-width="1.1" opacity="0.45"/><path d="M-51.64 14.35 A53.6 53.6 0 0 1 -52.71 9.74" fill="none" stroke="url(#g21)" stroke-width="1.1" opacity="0.45"/><path d="M-50.93 7.64 A51.5 51.5 0 0 1 -51.41 3.12" fill="none" stroke="url(#g21)" stroke-width="1.1" opacity="0.45"/><path d="M-33.82 44.13 A55.6 55.6 0 0 1 -37.59 40.97" fill="none" stroke="url(#g21)" stroke-width="1.1" opacity="0.45"/><path d="M-12.99 62.36 A63.7 63.7 0 0 1 -18.44 60.97" fill="none" stroke="url(#g21)" stroke-width="1.1" opacity="0.45"/><path d="M-7.18 63.29 A63.7 63.7 0 0 1 -12.73 62.41" fill="none" stroke="url(#g21)" stroke-width="1.1" opacity="0.45"/><path d="M-1.46 56.98 A57 57 0 0 1 -6.48 56.63" fill="none" stroke="url(#g21)" stroke-width="1.1" opacity="0.45"/><path d="M-32.45 -6.00 A33 33 0 0 1 -31.79 -8.84" fill="none" stroke="url(#g21)" stroke-width="1.1" opacity="0.45"/><path d="M-24.34 -20.77 A32 32 0 0 1 -22.42 -22.84" fill="none" stroke="url(#g21)" stroke-width="1.1" opacity="0.45"/><path d="M-19.09 -23.14 A30 30 0 0 1 -16.98 -24.73" fill="none" stroke="url(#g21)" stroke-width="1.1" opacity="0.45"/><path d="M-22.39 -32.54 A39.5 39.5 0 0 1 -19.43 -34.39" fill="none" stroke="url(#g21)" stroke-width="1.1" opacity="0.45"/><path d="M-20.77 -46.58 A51 51 0 0 1 -16.58 -48.23" fill="none" stroke="url(#g21)" stroke-width="1.1" opacity="0.45"/><path d="M-18.59 -49.63 A53 53 0 0 1 -14.14 -51.08" fill="none" stroke="url(#g21)" stroke-width="1.1" opacity="0.45"/><path d="M-15.93 -61.47 A63.5 63.5 0 0 1 -10.45 -62.63" fill="none" stroke="url(#g21)" stroke-width="1.1" opacity="0.45"/><path d="M-10.16 -67.74 A68.5 68.5 0 0 1 -4.14 -68.37" fill="none" stroke="url(#g21)" stroke-width="1.1" opacity="0.45"/><path d="M-4.07 -65.87 A66 66 0 0 1 1.76 -65.98" fill="none" stroke="url(#g21)" stroke-width="1.1" opacity="0.45"/><path d="M-25.00 -0.20 A25 25 0 0 1 -24.88 -2.41" fill="none" stroke="url(#g21)" stroke-width="1.1" opacity="0.45"/></g></svg></div>
<div class="p r" style="left:906.8px;top:297.6px;width:287.6px;height:162.2px"><div class="pb" style="left:117px;top:56px">P</div><svg width="287.6" height="162.2" style="position:absolute;left:0;top:0"><g transform="translate(1.2 1.2)" fill="#2e2690"><path d="M153.7 66.4 L160.8 66.4 L158.3 86.1 L156.6 86.1 Z"/><circle cx="157.4" cy="92.5" r="3.2"/></g><g fill="#8c80c4"><path d="M153.7 66.4 L160.8 66.4 L158.3 86.1 L156.6 86.1 Z"/><circle cx="157.4" cy="92.5" r="3.2"/></g></svg></div>
</body></html>
